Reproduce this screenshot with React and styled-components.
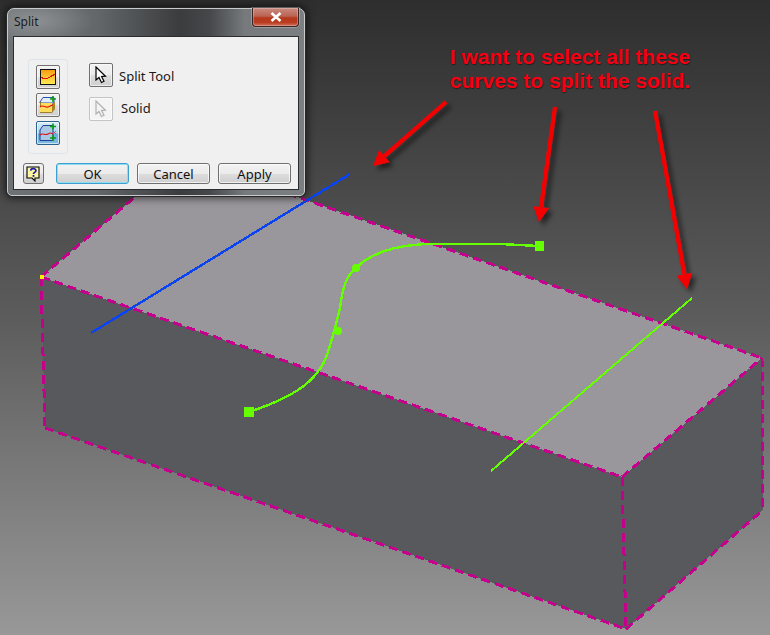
import React from "react";
import styled, { createGlobalStyle } from "styled-components";

const Global = createGlobalStyle`
  html, body { margin: 0; padding: 0; background: #333; }
  #root { width: 770px; height: 635px; overflow: hidden; }
`;

const Stage = styled.div`
  position: relative;
  width: 770px;
  height: 635px;
  overflow: hidden;
  background: linear-gradient(180deg, #2e2e2e 0%, #5c5c5c 50%, #989898 100%);
  font-family: "Noto Sans", "Liberation Sans", sans-serif;
`;

const Scene = styled.svg`
  display: block;
  width: 770px;
  height: 635px;
`;

const Note = styled.div`
  position: absolute;
  left: 420px;
  top: 45px;
  width: 300px;
  text-align: center;
  font-family: "Liberation Sans", Arial, sans-serif;
  font-weight: 700;
  font-size: 21px;
  line-height: 24px;
  color: #f50012;
  text-shadow: 1px 1px 1px rgba(0, 0, 0, 0.45);
`;

const Window = styled.div`
  position: absolute;
  left: 7px;
  top: 8px;
  width: 298px;
  height: 188px;
  box-sizing: border-box;
  padding: 0 5px 5px;
  display: flex;
  flex-direction: column;
  border-radius: 7px 7px 5px 5px;
  border: 1px solid #c8cacb;
  background:
    radial-gradient(ellipse 60px 24px at 26px 12px, #8d9193 0%, rgba(141, 145, 147, 0) 100%),
    linear-gradient(90deg, #6e7274 0%, #63676a 30%, #3b3c3e 58%, #45474a 68%, #767a7c 80%, #7b7f81 100%);
  box-shadow: 0 0 0 1px #26282a, 0 0 9px 2px rgba(0, 0, 0, 0.65);
`;

const TitleBar = styled.div`
  height: 27px;
  flex: none;
  display: flex;
  justify-content: space-between;
  align-items: flex-start;
`;

const Title = styled.span`
  margin: 5px 0 0 1px;
  font-size: 12px;
  line-height: 16px;
  color: #1b1c1e;
`;

const CloseButton = styled.div`
  width: 47px;
  height: 19px;
  margin: -1px 0 0 0;
  box-sizing: border-box;
  display: flex;
  align-items: center;
  justify-content: center;
  border: 1px solid #3c2422;
  border-top: none;
  border-radius: 0 0 4px 4px;
  background: linear-gradient(180deg, #c98a80 0%, #bb6453 45%, #b5371c 55%, #b93c20 80%, #d0705c 100%);
  box-shadow: inset 0 0 0 1px rgba(255, 255, 255, 0.25), 0 0 0 1px rgba(255,255,255,0.25);
`;

const Client = styled.div`
  flex: 1;
  box-sizing: border-box;
  border: 1px solid #2b2d2f;
  background: #f0f0f0;
  padding: 22px 7px 5px 14px;
  display: flex;
  flex-direction: column;
`;

const Body = styled.div`
  display: flex;
  gap: 21px;
  flex: 1;
`;

const StepGroup = styled.div`
  width: 40px;
  height: 95px;
  box-sizing: border-box;
  border: 1px solid #dde3e8;
  border-radius: 3px;
  padding: 5px 0 0 7px;
  display: flex;
  flex-direction: column;
  gap: 4px;
`;

const ToolButton = styled.div`
  width: 24px;
  height: 24px;
  box-sizing: border-box;
  display: flex;
  align-items: center;
  justify-content: center;
  border-radius: 2px;
  border: 1px solid ${(p) => (p.$active ? "#2c628b" : p.$disabled ? "#c4c4c4" : "#707070")};
  background: ${(p) =>
    p.$active
      ? "linear-gradient(180deg, #d8ecf8 0%, #a9d4ee 50%, #6cb0dc 55%, #7fbbe2 100%)"
      : p.$disabled
      ? "#f4f4f4"
      : "linear-gradient(180deg, #f2f2f2 0%, #ebebeb 50%, #dddddd 52%, #cfcfcf 100%)"};
  box-shadow: inset 0 0 0 1px rgba(255, 255, 255, 0.6);
`;

const Selectors = styled.div`
  padding-top: 4px;
  display: flex;
  flex-direction: column;
  gap: 10px;
`;

const SelectorRow = styled.div`
  display: flex;
  align-items: center;
  gap: ${(p) => p.$gap}px;
`;

const SelectorLabel = styled.span`
  font-size: 13px;
  line-height: 18px;
  color: #1a1a1a;
  transform: translateY(${(p) => p.$shift}px);
`;

const Footer = styled.div`
  display: flex;
  align-items: stretch;
  height: 21px;
  gap: 8px;
  margin-left: -5px;
`;

const HelpButton = styled.div`
  width: 21px;
  margin-right: 4px;
  box-sizing: border-box;
  display: flex;
  align-items: center;
  justify-content: center;
  border: 1px solid #707070;
  border-radius: 3px;
  background: linear-gradient(180deg, #f2f2f2 0%, #ebebeb 50%, #dddddd 52%, #cfcfcf 100%);
`;

const Button = styled.div`
  width: 73px;
  box-sizing: border-box;
  display: flex;
  align-items: center;
  justify-content: center;
  font-size: 13px;
  color: #111;
  border-radius: 3px;
  border: 1px solid ${(p) => (p.$primary ? "#3c9fd0" : "#707070")};
  background: linear-gradient(180deg, #f2f2f2 0%, #ebebeb 50%, #dddddd 52%, #cfcfcf 100%);
  box-shadow: inset 0 0 0 1px ${(p) => (p.$primary ? "#8fdcf5" : "rgba(255,255,255,0.7)")};
`;

const Cursor = ({ faded }) => (
  <svg width="14" height="18" viewBox="0 0 14 18">
    <path
      d="M2 1 L2 14 L5 11.5 L7.5 16.5 L10 15.3 L7.6 10.5 L11.5 10.2 Z"
      fill={faded ? "#f4f4f4" : "#fff"}
      stroke={faded ? "#b0b0b0" : "#000"}
      strokeWidth="1.2"
      strokeLinejoin="miter"
    />
  </svg>
);

const SplitFaceIcon = () => (
  <svg width="16" height="16" viewBox="0 0 16 16" shapeRendering="crispEdges">
    <defs>
      <linearGradient id="sf" x1="0" y1="0" x2="0" y2="1">
        <stop offset="0" stopColor="#f79a10" />
        <stop offset="1" stopColor="#ffee55" />
      </linearGradient>
    </defs>
    <rect x="0.5" y="0.5" width="15" height="15" fill="url(#sf)" stroke="#111" />
    <path d="M1 8 C4 11 7 10 10 8 S14 6 15 5" fill="none" stroke="#e01010" strokeWidth="1.3" />
  </svg>
);

const SplitPartIcon = () => (
  <svg width="20" height="20" viewBox="0 0 20 20">
    <path d="M2 7 L5 2.5 H16 V8 H2 Z" fill="#e3edf7" stroke="#2a4fa8" />
    <path d="M2 8 H14 V17.5 H2 Z" fill="#ffdc5c" />
    <path d="M14 9 L17 7 V14 L14 18 Z" fill="#a88420" />
    <path d="M2.5 7 V11 M2 17.5 H14" stroke="#8a6a10" strokeWidth="0.8" />
    <path d="M2 12 C5 9 7 13 10 12 S13 10 15 10" fill="none" stroke="#e01010" strokeWidth="1.1" />
    <path d="M15 1 V7 M12 4 H18" stroke="#0a9a14" strokeWidth="1.6" />
  </svg>
);

const SplitBodyIcon = () => (
  <svg width="20" height="20" viewBox="0 0 20 20">
    <path d="M2 7 L5 2.5 H15 V17.5 H2 Z" fill="#a8c8e4" stroke="#1f3f98" />
    <path d="M2 12 C5 9 7 13 10 11 S13 10 15 11" fill="none" stroke="#e01010" strokeWidth="1.1" />
    <path d="M15 0.5 V6.5 M12 3.5 H18 M15 12 V18 M12 15 H18" stroke="#0a9a14" strokeWidth="1.6" />
    <path d="M15 8 L18 11 M18 8 L15 11" stroke="#d04040" strokeWidth="0.8" />
  </svg>
);

const HelpIcon = () => (
  <svg width="15" height="16" viewBox="0 0 15 16">
    <path d="M1 1 H13 V12 H9 L9 15 L6 12 H1 Z" fill="#fdf6a0" stroke="#000" strokeWidth="1.1" />
    <path d="M4.7 4.6 C4.8 1.9 10 1.9 9.9 4.7 C9.9 6.5 7.5 6.3 7.5 8" fill="none" stroke="#1a1ab0" strokeWidth="1.7" />
    <rect x="6.6" y="9" width="1.8" height="1.8" fill="#1a1ab0" />
  </svg>
);

const Arrow = ({ x1, y1, x2, y2 }) => {
  const len = Math.hypot(x2 - x1, y2 - y1);
  const ux = (x2 - x1) / len;
  const uy = (y2 - y1) / len;
  const bx = x2 - ux * 15;
  const by = y2 - uy * 15;
  const px = -uy * 8;
  const py = ux * 8;
  return (
    <g>
      <line x1={x1} y1={y1} x2={bx} y2={by} stroke="#f50000" strokeWidth="4.2" />
      <polygon points={`${x2},${y2} ${bx + px},${by + py} ${bx - px},${by - py}`} fill="#f50000" />
    </g>
  );
};

const EDGE = "#c4008c";

export default function App() {
  return (
    <Stage>
      <Global />
      <Scene viewBox="0 0 770 635">
        <defs>
          <filter id="arrowShadow" x="-30%" y="-30%" width="160%" height="160%">
            <feDropShadow dx="4" dy="4" stdDeviation="2.5" floodColor="#000" floodOpacity="0.55" />
          </filter>
        </defs>
        <g shapeRendering="crispEdges">
          <polygon points="41,277 182,157 762,358 622,477" fill="#99979b" />
          <polygon points="41,277 622,477 626,629 45,428" fill="#58595c" />
          <polygon points="622,477 762,358 763,510 626,629" fill="#58595c" />
          <g fill="none" stroke={EDGE} strokeWidth="3" strokeDasharray="9 5">
            <path d="M41 277 L182 157" />
            <path d="M182 157 L762 358" />
            <path d="M41 277 L622 477" />
            <path d="M622 477 L762 358" />
            <path d="M41 277 L45 428" />
            <path d="M622 477 L626 629" />
            <path d="M762 358 L763 510" />
            <path d="M45 428 L626 629" />
            <path d="M626 629 L763 510" />
          </g>
          <rect x="40" y="275" width="4" height="4" fill="#f5f000" />
          <line x1="91" y1="333" x2="350" y2="174" stroke="#0a44f0" strokeWidth="2.4" />
          <line x1="491" y1="471" x2="692" y2="298" stroke="#66ff00" strokeWidth="2" />
          <path
            d="M249 412 C285 400 318 385 328 352 C335 330 337 320 340 308 C343 285 347 275 356 268 C372 252 395 246 425 244 L500 244 L539 246"
            fill="none"
            stroke="#66ff00"
            strokeWidth="2.4"
          />
          <rect x="244" y="407" width="10" height="10" fill="#66ff00" />
          <rect x="535" y="241" width="9" height="10" fill="#66ff00" />
        </g>
        <circle cx="338" cy="331" r="4" fill="#66ff00" />
        <circle cx="356" cy="268" r="4" fill="#66ff00" />
        <g filter="url(#arrowShadow)">
          <Arrow x1={446} y1={102} x2={373} y2={166} />
          <Arrow x1={555} y1={107} x2={539} y2={222} />
          <Arrow x1={655} y1={111} x2={687} y2={289} />
        </g>
      </Scene>
      <Note>
        I want to select all these
        <br />
        curves to split the solid.
      </Note>
      <Window>
        <TitleBar>
          <Title>Split</Title>
          <CloseButton>
            <svg width="12" height="10" viewBox="0 0 12 10">
              <path d="M1.5 1 L10.5 9 M10.5 1 L1.5 9" stroke="#fff" strokeWidth="2.6" />
            </svg>
          </CloseButton>
        </TitleBar>
        <Client>
          <Body>
            <StepGroup>
              <ToolButton>
                <SplitFaceIcon />
              </ToolButton>
              <ToolButton>
                <SplitPartIcon />
              </ToolButton>
              <ToolButton $active>
                <SplitBodyIcon />
              </ToolButton>
            </StepGroup>
            <Selectors>
              <SelectorRow $gap={6}>
                <ToolButton>
                  <Cursor />
                </ToolButton>
                <SelectorLabel $shift={1}>Split Tool</SelectorLabel>
              </SelectorRow>
              <SelectorRow $gap={8}>
                <ToolButton $disabled>
                  <Cursor faded />
                </ToolButton>
                <SelectorLabel $shift={-1}>Solid</SelectorLabel>
              </SelectorRow>
            </Selectors>
          </Body>
          <Footer>
            <HelpButton>
              <HelpIcon />
            </HelpButton>
            <Button $primary>OK</Button>
            <Button>Cancel</Button>
            <Button>Apply</Button>
          </Footer>
        </Client>
      </Window>
    </Stage>
  );
}
